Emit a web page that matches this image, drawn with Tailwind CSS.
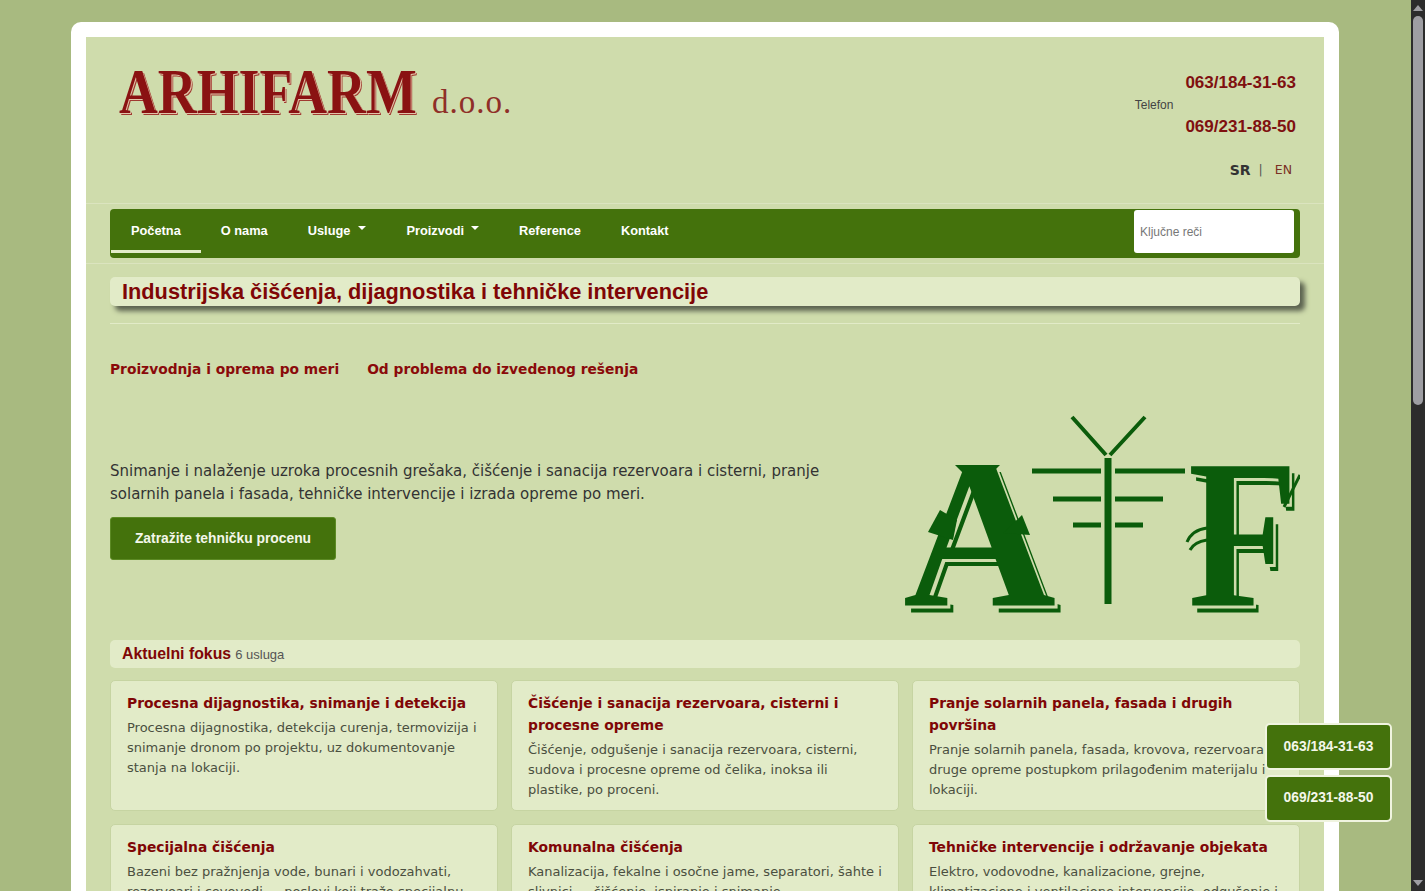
<!DOCTYPE html>
<html lang="sr">
<head>
    <meta charset="UTF-8">
    <title>Arhifarm d.o.o.</title>
    <script src="https://cdn.jsdelivr.net/npm/@tailwindcss/browser@4"></script>
</head>
<body class="h-[891px] overflow-hidden bg-[#a8ba80]">
<div class="flex h-[891px] overflow-hidden">
    <div class="relative w-[1411px] shrink-0 overflow-hidden pt-[22px]">
        <!-- White frame -->
        <div class="ml-[71px] h-[1200px] w-[1268px] rounded-[10px] bg-white p-[15px]">
            <div class="h-full bg-[#cfdcac]">
                <!-- Header -->
                <header class="flex h-[167px] items-start justify-between border-b border-[#dbe4bf] pr-[28px] pl-[33px]">
                    <div class="flex items-baseline pt-[20px]">
                        <span class="inline-block w-[313px] shrink-0 origin-left scale-x-[0.84] font-['Liberation_Serif'] text-[64px] leading-[70px] font-bold whitespace-nowrap text-[#8a1212] [text-shadow:1px_1px_0_#e2c4a8,2px_2px_0_#a03a30]">ARHIFARM</span>
                        <span class="font-['Liberation_Serif'] text-[33px] leading-[70px] tracking-[1px] text-[#8f2f28]">d.o.o.</span>
                    </div>
                    <div class="flex flex-col items-end pt-[35px] font-['Liberation_Sans']">
                        <div class="flex items-center gap-[12px]">
                            <span class="text-[12px] text-[#444]">Telefon</span>
                            <div class="flex flex-col gap-[22px] text-[17px] leading-[22px] font-bold text-[#7f1010]">
                                <span>063/184-31-63</span>
                                <span>069/231-88-50</span>
                            </div>
                        </div>
                        <div class="mt-[23px] mr-[4px] flex items-center font-['DejaVu_Sans'] text-[12.5px] leading-[18px]">
                            <span class="text-[14px] font-bold text-[#333]">SR</span>
                            <span class="ml-[8px] text-[#555]">|</span>
                            <span class="ml-[12px] text-[#7a3024]">EN</span>
                        </div>
                    </div>
                </header>

                <!-- Nav -->
                <div class="border-b border-[#dbe4bf] px-[24px] pt-[5px] pb-[5px]">
                    <nav class="flex h-[49px] items-start justify-between rounded-[4px] bg-[#44720c] font-['Liberation_Sans'] text-[12.8px] font-bold text-white">
                        <div class="flex h-[44px]">
                            <a class="ml-px flex h-[44px] items-center border-b-[3px] border-[#e2ebc8] px-[20px] pt-[2px]">Početna</a>
                            <a class="flex items-center px-[20px]">O nama</a>
                            <a class="flex items-center px-[20px]">Usluge<span class="mb-[7px] ml-[8px] h-0 w-0 border-x-[4px] border-t-[4px] border-x-transparent border-t-white"></span></a>
                            <a class="flex items-center px-[20px]">Proizvodi<span class="mb-[7px] ml-[7px] h-0 w-0 border-x-[4px] border-t-[4px] border-x-transparent border-t-white"></span></a>
                            <a class="flex items-center px-[20px]">Reference</a>
                            <a class="flex items-center px-[20px]">Kontakt</a>
                        </div>
                        <input placeholder="Ključne reči" class="mt-px mr-[6px] h-[43px] w-[160px] rounded-[3px] bg-white px-[6px] text-[12px] font-normal placeholder-[#777]">
                    </nav>
                </div>

                <div class="px-[24px]">
                    <!-- Title -->
                    <h1 class="mt-[13px] h-[29px] rounded-[5px] bg-[#e2ebc8] px-[12px] font-['Liberation_Sans'] text-[21.75px] leading-[29px] font-bold text-[#7f0606] shadow-[5px_5px_5px_#5c6350]">Industrijska čišćenja, dijagnostika i tehničke intervencije</h1>
                    <div class="mt-[17px] h-px bg-[#e2ebc8]"></div>

                    <div class="mt-[36px] flex gap-[28px] font-['DejaVu_Sans'] text-[13.8px] leading-[18px] font-bold text-[#8a0a0a]">
                        <a>Proizvodnja i oprema po meri</a>
                        <a>Od problema do izvedenog rešenja</a>
                    </div>

                    <!-- Hero -->
                    <div class="mt-[28px] flex h-[221px] items-start justify-between">
                        <div class="w-[730px] pt-[54px]">
                            <p class="font-['DejaVu_Sans'] text-[15px] leading-[23px] text-[#333]">Snimanje i nalaženje uzroka procesnih grešaka, čišćenje i sanacija rezervoara i cisterni, pranje solarnih panela i fasada, tehničke intervencije i izrada opreme po meri.</p>
                            <a class="mt-[11px] flex h-[43px] w-[226px] items-center justify-center rounded-[3px] border border-[#5c8a24] bg-[#44720c] font-['Liberation_Sans'] text-[13.85px] font-bold text-[#f4f7ea]">Zatražite tehničku procenu</a>
                        </div>
                        <!-- AF logo: letters are text, antenna and flourishes are drawn on top -->
                        <div class="relative mt-[8px] h-[206px] w-[396px] shrink-0 font-['Liberation_Serif'] text-[212px] leading-[140px] font-bold text-[#0b5c0b] [text-shadow:3px_3px_0_#cfdcac,6px_7px_0_#0b5c0b]">
                            <span class="absolute top-[50px] left-[-1px]">A</span>
                            <span class="absolute top-[50px] left-[284px] origin-left scale-x-[0.85]">F</span>
                            <svg width="396" height="206" viewBox="0 0 396 206" class="absolute top-0 left-0" fill="#0b5c0b">
                                <path d="M36 96L24 118L49 126L53 106Z"/>
                                <path d="M118 101L126 121L99 119Z"/>
                                <path d="M51 51H96L85 62H62Z"/>
                                <g stroke="#0b5c0b" fill="none">
                                    <path d="M168 3L202 41M241 3L206 41" stroke-width="4"/>
                                    <path d="M204 44V190" stroke-width="7"/>
                                    <path d="M128 57H197M211 57H281" stroke-width="5"/>
                                    <path d="M149 85H197M211 85H259" stroke-width="5"/>
                                    <path d="M169 111H197M211 111H239" stroke-width="5"/>
                                    <path d="M396 61L380 93" stroke-width="3"/>
                                    <path d="M283 128Q288 116 303 114M286 136Q290 128 303 126" stroke-width="3"/>
                                </g>
                            </svg>
                        </div>
                    </div>

                    <!-- Cards -->
                    <div class="mt-[13px] flex h-[28px] items-baseline gap-[4px] rounded-[5px] bg-[#e2ebc8] px-[12px] font-['Liberation_Sans'] leading-[27px]">
                        <span class="text-[15.85px] font-bold text-[#7f0606]">Aktuelni fokus</span>
                        <span class="text-[13px] text-[#555]">6 usluga</span>
                    </div>
                    <div class="mt-[12px] grid grid-cols-3 gap-[13px] font-['DejaVu_Sans']">
                        <article class="h-[131px] rounded-[5px] border border-[#c6d4a2] bg-[#e2ebc8] px-[16px] pt-[11px]">
                            <h3 class="text-[13.85px] leading-[22px] font-bold text-[#7f0606]">Procesna dijagnostika, snimanje i detekcija</h3>
                            <p class="mt-[4px] text-[13px] leading-[20px] text-[#4a4f40]">Procesna dijagnostika, detekcija curenja, termovizija i snimanje dronom po projektu, uz dokumentovanje stanja na lokaciji.</p>
                        </article>
                        <article class="h-[131px] rounded-[5px] border border-[#c6d4a2] bg-[#e2ebc8] px-[16px] pt-[11px]">
                            <h3 class="text-[13.85px] leading-[22px] font-bold text-[#7f0606]">Čišćenje i sanacija rezervoara, cisterni i procesne opreme</h3>
                            <p class="mt-[4px] text-[13px] leading-[20px] text-[#4a4f40]">Čišćenje, odgušenje i sanacija rezervoara, cisterni, sudova i procesne opreme od čelika, inoksa ili plastike, po proceni.</p>
                        </article>
                        <article class="h-[131px] rounded-[5px] border border-[#c6d4a2] bg-[#e2ebc8] px-[16px] pt-[11px]">
                            <h3 class="text-[13.85px] leading-[22px] font-bold text-[#7f0606]">Pranje solarnih panela, fasada i drugih površina</h3>
                            <p class="mt-[4px] text-[13px] leading-[20px] text-[#4a4f40]">Pranje solarnih panela, fasada, krovova, rezervoara i druge opreme postupkom prilagođenim materijalu i lokaciji.</p>
                        </article>
                        <article class="h-[131px] rounded-[5px] border border-[#c6d4a2] bg-[#e2ebc8] px-[16px] pt-[11px]">
                            <h3 class="text-[13.85px] leading-[22px] font-bold text-[#7f0606]">Specijalna čišćenja</h3>
                            <p class="mt-[4px] text-[13px] leading-[20px] text-[#4a4f40]">Bazeni bez pražnjenja vode, bunari i vodozahvati, rezervoari i cevovodi — poslovi koji traže specijalnu opremu.</p>
                        </article>
                        <article class="h-[131px] rounded-[5px] border border-[#c6d4a2] bg-[#e2ebc8] px-[16px] pt-[11px]">
                            <h3 class="text-[13.85px] leading-[22px] font-bold text-[#7f0606]">Komunalna čišćenja</h3>
                            <p class="mt-[4px] text-[13px] leading-[20px] text-[#4a4f40]">Kanalizacija, fekalne i osočne jame, separatori, šahte i slivnici — čišćenje, ispiranje i snimanje.</p>
                        </article>
                        <article class="h-[131px] rounded-[5px] border border-[#c6d4a2] bg-[#e2ebc8] px-[16px] pt-[11px]">
                            <h3 class="text-[13.85px] leading-[22px] font-bold text-[#7f0606]">Tehničke intervencije i održavanje objekata</h3>
                            <p class="mt-[4px] text-[13px] leading-[20px] text-[#4a4f40]">Elektro, vodovodne, kanalizacione, grejne, klimatizacione i ventilacione intervencije, odgušenje i servis.</p>
                        </article>
                    </div>
                </div>
            </div>
        </div>

        <!-- Floating phone buttons -->
        <div class="absolute top-[723px] left-[1265px] flex flex-col gap-[5px] font-['Liberation_Sans'] text-[13.8px] font-bold text-[#f4f7ea]">
            <a class="flex h-[47px] w-[127px] items-center justify-center rounded-[5px] border-2 border-[#f0f4e0] bg-[#44720c] pt-[1px]">063/184-31-63</a>
            <a class="flex h-[47px] w-[127px] items-center justify-center rounded-[5px] border-2 border-[#f0f4e0] bg-[#44720c]">069/231-88-50</a>
        </div>
    </div>

    <!-- Scrollbar -->
    <div class="relative w-[14px] shrink-0 bg-[#2c2c2c]">
        <div class="mx-auto mt-[5px] h-0 w-0 border-x-[5px] border-b-[6px] border-x-transparent border-b-[#9e9ea3]"></div>
        <div class="mx-auto mt-[5px] h-[389px] w-[10px] rounded-[5px] bg-[#9e9ea3]"></div>
        <div class="absolute bottom-[5px] left-[2px] h-0 w-0 border-x-[5px] border-t-[6px] border-x-transparent border-t-[#9e9ea3]"></div>
    </div>
</div>
</body>
</html>
